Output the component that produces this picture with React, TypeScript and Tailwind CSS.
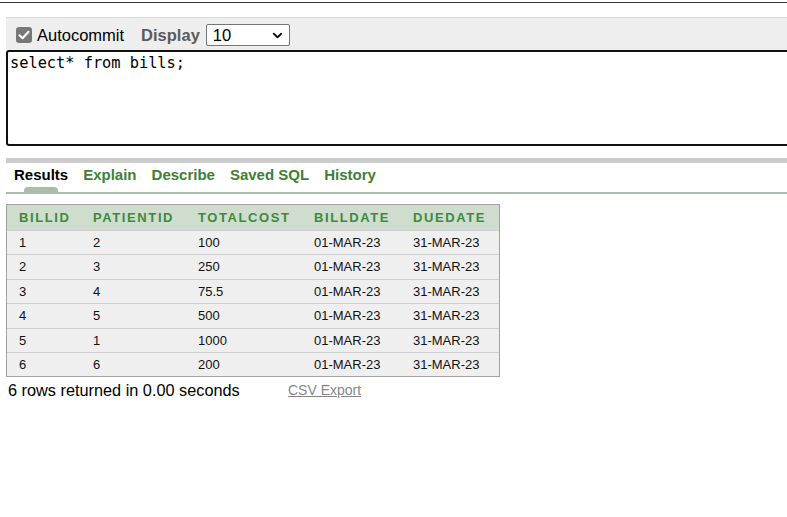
import { ChevronDown } from "lucide-react";

const rows = [
  ["1", "2", "100", "01-MAR-23", "31-MAR-23"],
  ["2", "3", "250", "01-MAR-23", "31-MAR-23"],
  ["3", "4", "75.5", "01-MAR-23", "31-MAR-23"],
  ["4", "5", "500", "01-MAR-23", "31-MAR-23"],
  ["5", "1", "1000", "01-MAR-23", "31-MAR-23"],
  ["6", "6", "200", "01-MAR-23", "31-MAR-23"],
];

const cols = [
  { name: "BILLID", w: "w-[74px]" },
  { name: "PATIENTID", w: "w-[105px]" },
  { name: "TOTALCOST", w: "w-[116px]" },
  { name: "BILLDATE", w: "w-[99px]" },
  { name: "DUEDATE", w: "w-[98px]" },
];

function Checkbox() {
  return (
    <span className="flex h-4 w-4 items-center justify-center rounded-[3px] bg-[#777777]">
      <svg viewBox="0 0 16 16" className="h-4 w-4" fill="none">
        <path d="M3.5 8.3 L6.6 11.2 L12.5 4.8" stroke="white" strokeWidth="2.2" strokeLinecap="round" strokeLinejoin="round" />
      </svg>
    </span>
  );
}

export default function App() {
  return (
    <div className="h-[517px] w-[787px] overflow-hidden bg-white font-['Liberation_Sans',Arial,sans-serif] text-black">
      <div className="mt-[2px] h-px bg-[#333333]" />

      {/* toolbar */}
      <div className="ml-[6px] mt-[14px] flex h-[33px] items-center border-t border-[#d9d9d9] bg-[#eeeeee] pl-[10px] pt-[2px]">
        <Checkbox />
        <span className="ml-[5px] text-[16.5px]">Autocommit</span>
        <span className="ml-[17px] text-[16.5px] font-bold text-[#5b5b5b]">Display</span>
        <div className="ml-[6px] flex h-[22px] w-[84px] items-center justify-between rounded-[2px] border border-[#767676] bg-white pl-[6px] pr-[4px]">
          <span className="text-[16.5px] leading-none">10</span>
          <ChevronDown size={15} strokeWidth={3} />
        </div>
      </div>

      {/* editor */}
      <div className="-mr-2 ml-[6px] h-[96px] rounded-[3px] border-2 border-[#111111] px-[2px] pt-[2px] font-['DejaVu_Sans_Mono',monospace] text-[15.3px] leading-[18px]">
        select* from bills;
      </div>

      <div className="ml-[6px] mt-[12px] h-[5px] bg-[#cccccc]" />

      {/* tabs */}
      <div className="ml-[6px] flex h-[29px] items-start gap-[15px] pl-[8px] pt-[3px] text-[15px] font-bold leading-[17px] text-[#3e7f36]">
        <div className="relative h-[26px]">
          <span className="text-black">Results</span>
          <span className="absolute bottom-0 left-[10px] h-[5px] w-[34px] rounded-t-[4px] bg-[#a9bea9]" />
        </div>
        <span>Explain</span>
        <span>Describe</span>
        <span>Saved SQL</span>
        <span>History</span>
      </div>
      <div className="ml-[6px] h-[2px] bg-[#a9bea9]" />

      {/* results table */}
      <div className="ml-[6px] mt-[10px] w-[494px] border border-[#a3a3a3]">
        <div className="flex h-[25px] items-center bg-[#cfddcf] text-[13px] font-bold tracking-[1.6px] text-[#3e8a3a]">
          {cols.map((c) => (
            <div key={c.name} className={`${c.w} pl-[12px]`}>
              {c.name}
            </div>
          ))}
        </div>
        {rows.map((r, i) => (
          <div key={i} className="flex h-[24.4px] items-center border-t border-[#cfcfcf] bg-[#efefef] text-[13px] text-[#111111]">
            {r.map((v, j) => (
              <div key={j} className={`${cols[j].w} pl-[12px]`}>
                {v}
              </div>
            ))}
          </div>
        ))}
      </div>

      <div className="ml-[8px] mt-px flex items-center text-[16.3px]">
        <span className="w-[280px]">6 rows returned in 0.00 seconds</span>
        <span className="text-[14px] text-[#888888] underline">CSV Export</span>
      </div>
    </div>
  );
}
